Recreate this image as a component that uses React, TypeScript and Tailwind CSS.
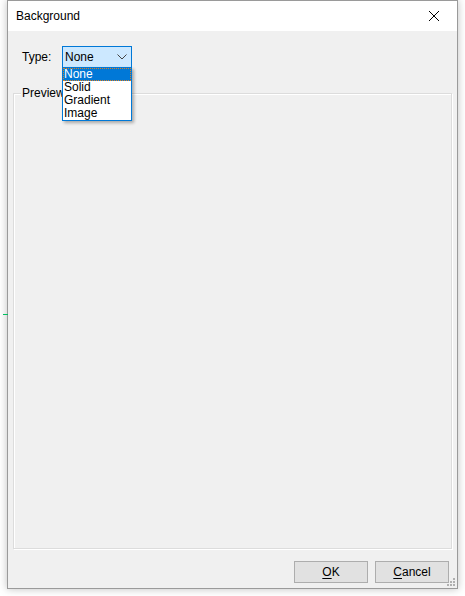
import React from 'react';

const font = { fontFamily: '"Liberation Sans", Arial, sans-serif' };

export default function App() {
  return (
    <div className="relative w-[465px] h-[596px] bg-white overflow-hidden text-[12px] text-black" style={font}>
      {/* green marker on the left */}
      <div className="absolute left-[3px] top-[314px] w-[5px] h-[1px] bg-[#00c060]" />

      {/* Dialog window */}
      <div className="ml-[7px] w-[451px] h-[589px] flex flex-col border border-[#9a9a9a] bg-[#f0f0f0] shadow-[0_0_8px_rgba(0,0,0,0.25)]">
        {/* Title bar */}
        <div className="h-[30px] shrink-0 bg-white flex items-center pl-[8px]">
          <span className="flex-1 text-[12px] leading-none">Background</span>
          <div className="w-[46px] h-[30px] flex items-center justify-center">
            <svg width="12" height="12" viewBox="0 0 12 12" stroke="#000" strokeWidth="1" fill="none">
              <path d="M1 1 L11 11 M11 1 L1 11" />
            </svg>
          </div>
        </div>

        {/* Body */}
        <div className="relative flex-1 flex flex-col px-[5px]">
          {/* Type row */}
          <div className="flex items-center h-[22px] mt-[15px] pl-[9px]">
            <span className="w-[40px]">Type:</span>
            <div className="w-[70px] h-[22px] border border-[#0078d7] bg-[#cce8ff] flex items-center pl-[2px] pr-[4px]">
              <span className="flex-1 leading-none">None</span>
              <svg width="10" height="6" viewBox="0 0 10 6" fill="none" stroke="#444" strokeWidth="1">
                <path d="M0.5 0.5 L5 5 L9.5 0.5" />
              </svg>
            </div>
          </div>

          {/* Preview group box */}
          <div className="relative mt-[25px] h-[456px] border border-[#dcdcdc] shadow-[inset_1px_1px_0_#fff,1px_1px_0_#fff]">
            <span className="absolute -top-[8px] left-[7px] px-[1px] bg-[#f0f0f0] leading-[14px]">Preview</span>
          </div>

          {/* Buttons */}
          <div className="flex justify-end gap-[7px] mt-[12px] pr-[3px]">
            <button className="w-[74px] h-[22px] border border-[#adadad] bg-[#e1e1e1] leading-none">
              <span className="underline underline-offset-2">O</span>K
            </button>
            <button className="w-[74px] h-[22px] border border-[#adadad] bg-[#e1e1e1] leading-none">
              <span className="underline underline-offset-2">C</span>ancel
            </button>
          </div>

          {/* Resize grip */}
          <svg className="absolute right-[1px] bottom-[1px]" width="10" height="10" viewBox="0 0 10 10" fill="#b0b0b0">
            <rect x="7" y="1" width="2" height="2" />
            <rect x="4" y="4" width="2" height="2" />
            <rect x="7" y="4" width="2" height="2" />
            <rect x="1" y="7" width="2" height="2" />
            <rect x="4" y="7" width="2" height="2" />
            <rect x="7" y="7" width="2" height="2" />
          </svg>

          {/* Dropdown list */}
          <div className="absolute left-[54px] top-[36px] w-[70px] bg-white border border-[#0078d7] shadow-[2px_2px_3px_rgba(0,0,0,0.3)] leading-[13px]">
            <div className="bg-[#0078d7] text-white pl-[1px] h-[13px] outline outline-1 outline-dotted outline-[#e08020] -outline-offset-1">None</div>
            <div className="pl-[1px] h-[13px]">Solid</div>
            <div className="pl-[1px] h-[13px]">Gradient</div>
            <div className="pl-[1px] h-[13px]">Image</div>
          </div>
        </div>
      </div>
    </div>
  );
}
